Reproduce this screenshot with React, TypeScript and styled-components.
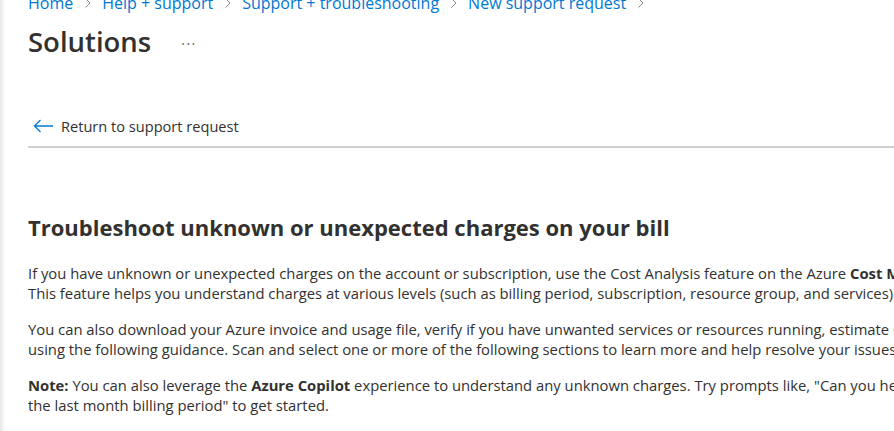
import React from "react";
import styled, { createGlobalStyle } from "styled-components";

const Global = createGlobalStyle`
  html, body { margin: 0; padding: 0; background: #fff; overflow: hidden; }
  body { font-family: "Open Sans", "Noto Sans", sans-serif; color: #323130; }
`;

const Blade = styled.div`
  width: 894px;
  height: 431px;
  overflow: hidden;
  box-shadow: inset 5px 0 4px -3px rgba(0, 0, 0, 0.12);
  padding-left: 28px;
  box-sizing: border-box;
`;

const Breadcrumb = styled.nav`
  display: flex;
  align-items: center;
  gap: 10px;
  height: 14px;
  margin-top: -4px;
  font-size: 16px;
  white-space: nowrap;
`;

const Crumb = styled.span`
  color: #0078d4;
`;

const Chevron = styled.svg`
  width: 9px;
  height: 12px;
  flex: none;
`;

const TitleRow = styled.div`
  display: flex;
  align-items: center;
  gap: 30px;
  margin-top: 11px;
  height: 42px;
`;

const Title = styled.h1`
  margin: 0;
  font-size: 27.5px;
  font-weight: 600;
  color: #323130;
  line-height: 42px;
`;

const More = styled.span`
  font-size: 14px;
  color: #605e5c;
  letter-spacing: 1.5px;
  margin-top: 2px;
`;

const BackLink = styled.div`
  display: flex;
  align-items: center;
  gap: 7px;
  margin-top: 53px;
  height: 20px;
  padding-left: 5px;
  font-size: 14.6px;
  color: #323130;
`;

const Divider = styled.hr`
  margin: 10px 0 0 0;
  border: none;
  height: 2px;
  background: #d2d0ce;
`;

const Heading = styled.h2`
  margin: 65px 0 0 0;
  font-size: 22px;
  font-weight: 700;
  line-height: 28px;
  color: #323130;
  white-space: nowrap;
`;

const Para = styled.p`
  margin: 22px 0 0 0;
  font-size: 14.8px;
  line-height: 20px;
  white-space: nowrap;
  color: #323130;
  & + & { margin-top: 16px; }
`;

const ChevronIcon = () => (
  <Chevron viewBox="0 0 9 12">
    <path d="M2.5 1.5 L7 6 L2.5 10.5" fill="none" stroke="#8a8886" strokeWidth="1" />
  </Chevron>
);

const crumbs = ["Home", "Help + support", "Support + troubleshooting", "New support request"];

export default function App() {
  return (
    <>
      <Global />
      <Blade>
        <Breadcrumb>
          {crumbs.map((c) => (
            <React.Fragment key={c}>
              <Crumb>{c}</Crumb>
              <ChevronIcon />
            </React.Fragment>
          ))}
        </Breadcrumb>
        <TitleRow>
          <Title>Solutions</Title>
          <More>···</More>
        </TitleRow>
        <BackLink>
          <svg width="21" height="14" viewBox="0 0 21 14">
            <path d="M20 7 H1.5 M7.5 1 L1.5 7 L7.5 13" fill="none" stroke="#0078d4" strokeWidth="1.3" />
          </svg>
          Return to support request
        </BackLink>
        <Divider />
        <Heading>Troubleshoot unknown or unexpected charges on your bill</Heading>
        <Para>
          If you have unknown or unexpected charges on the account or subscription, use the Cost Analysis feature on the Azure <b>Cost Management + Billing</b> page.
          <br />
          This feature helps you understand charges at various levels (such as billing period, subscription, resource group, and services).
        </Para>
        <Para>
          You can also download your Azure invoice and usage file, verify if you have unwanted services or resources running, estimate Cost and more
          <br />
          using the following guidance. Scan and select one or more of the following sections to learn more and help resolve your issues.
        </Para>
        <Para>
          <b>Note:</b> You can also leverage the <b>Azure Copilot</b> experience to understand any unknown charges. Try prompts like, "Can you help me analyze my costs for
          <br />
          the last month billing period" to get started.
        </Para>
      </Blade>
    </>
  );
}
